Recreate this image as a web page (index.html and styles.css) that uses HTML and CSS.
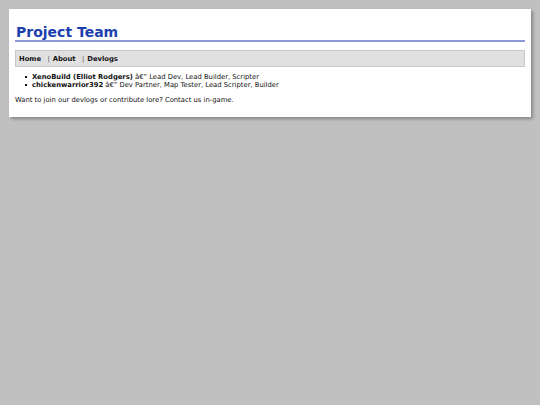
FILE: index.html
```html
<!DOCTYPE html>
<html>
<head>
<meta charset="utf-8">
<title>Project Team</title>
<link rel="stylesheet" href="styles.css">
</head>
<body>
<div class="page">
  <h1 class="title">Project Team</h1>
  <div class="nav">
    <a class="nav-link" href="#">Home</a>
    <span class="nav-sep">|</span><a class="nav-link" href="#">About</a>
    <span class="nav-sep">|</span><a class="nav-link" href="#">Devlogs</a>
  </div>
  <ul class="team">
    <li class="member"><b>XenoBuild (Elliot Rodgers)</b> â€” Lead Dev, Lead Builder, Scripter</li>
    <li class="member"><b>chickenwarrior392</b> â€” Dev Partner, Map Tester, Lead Scripter, Builder</li>
  </ul>
  <p class="note">Want to join our devlogs or contribute lore? Contact us in-game.</p>
</div>
</body>
</html>
```
FILE: styles.css
```css
html, body {
  margin: 0;
  padding: 0;
  background: #c0c0c0;
}
body {
  padding: 9px;
  font-family: "DejaVu Sans", Verdana, sans-serif;
  font-size: 6.8px;
  color: #111;
}
.page {
  background: #fff;
  padding: 8px 6px 13px 6px;
  box-shadow: 2px 2px 3px rgba(0,0,0,0.3);
}
.title {
  margin: 8px 0 0 0;
  padding: 0 0 0 1px;
  font-size: 14px;
  line-height: 15px;
  color: #1c3fae;
  border-bottom: 2px solid #8a9ad8;
}
.nav {
  margin-top: 8px;
  background: #e0e0e0;
  border: 1px solid #c8c8c8;
  padding: 4px 3px 3px 3px;
  font-weight: bold;
  line-height: 8px;
}
.nav-link {
  color: #111;
  text-decoration: none;
}
.nav-sep {
  color: #555;
  font-weight: normal;
  margin-left: 4px;
  margin-right: 3px;
}
.team {
  margin: 6px 0 0 0;
  padding-left: 17px;
  line-height: 8px;
  list-style: none;
}
.member::before {
  content: "";
  display: inline-block;
  width: 2px;
  height: 2px;
  background: #111;
  margin-left: -7px;
  margin-right: 5px;
  vertical-align: 1.5px;
}
.note {
  margin: 7px 0 0 0;
  line-height: 8px;
}
```
